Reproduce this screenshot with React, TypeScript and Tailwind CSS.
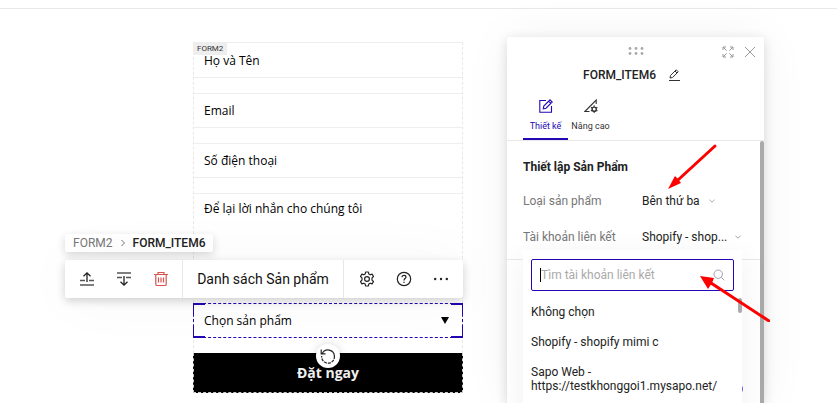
import type { ReactNode } from 'react';

const accounts = ['Không chọn', 'Shopify - shopify mimi c', 'Sapo Web - https://testkhonggoi1.mysapo.net/'];

function ToolButton({ label, children }: { label: string; children: ReactNode }) {
  return (
    <button type="button" aria-label={label} className="flex h-full w-[37px] items-center justify-center">
      {children}
    </button>
  );
}

function Chevron({ className = '' }: { className?: string }) {
  return (
    <svg aria-hidden="true" viewBox="0 0 8 8" fill="none" stroke="currentColor" className={`size-2 shrink-0 ${className}`}>
      <path d="M1.5 2.8 4 5.2 6.5 2.8" />
    </svg>
  );
}

function MoveUpIcon() {
  return (
    <svg viewBox="0 0 16 16" fill="none" className="size-4">
      <path d="M1 14h14M1 9.5h5M10 9.5h5" stroke="#555" strokeWidth="1.5" />
      <path d="M8 11V2M4.5 5.3 8 1.8l3.5 3.5" stroke="#222" strokeWidth="1.3" />
    </svg>
  );
}

function MoveDownIcon() {
  return (
    <svg viewBox="0 0 16 16" fill="none" className="size-4">
      <path d="M1 2h14M1 6.5h5M10 6.5h5" stroke="#555" strokeWidth="1.5" />
      <path d="M8 5v9M4.5 10.7 8 14.2l3.5-3.5" stroke="#222" strokeWidth="1.3" />
    </svg>
  );
}

function TrashIcon() {
  return (
    <svg viewBox="0 0 16 16" fill="none" stroke="#d9534f" className="size-4">
      <path d="M1 3.5h14M5 3.5v-2h6v2M2.8 4v9.2c0 .8.5 1.3 1.3 1.3h7.8c.8 0 1.3-.5 1.3-1.3V4M5.5 6.5v5M8 6.5v5M10.5 6.5v5" strokeWidth="1.2" />
    </svg>
  );
}

function GearIcon() {
  return (
    <svg viewBox="0 0 16 16" fill="none" stroke="#222" strokeWidth="1.2" strokeLinejoin="round" className="size-4">
      <path d="M6.6 1h2.8l.4 2 1.4.8 1.9-.7 1.4 2.4-1.5 1.4v2.2l1.5 1.4-1.4 2.4-1.9-.7-1.4.8-.4 2H6.6l-.4-2-1.4-.8-1.9.7-1.4-2.4L3 9.1V6.9L1.5 5.5l1.4-2.4 1.9.7 1.4-.8z" />
      <circle cx="8" cy="8" r="2.4" />
    </svg>
  );
}

function HelpIcon() {
  return (
    <svg viewBox="0 0 16 16" fill="none" stroke="#222" strokeWidth="1.2" className="size-4">
      <circle cx="8" cy="8" r="6.7" />
      <path d="M6 6.3c0-1.3.8-2 2-2s2 .7 2 1.8c0 1.5-2 1.5-2 3.3M8 10.7v1.2" />
    </svg>
  );
}

function Breadcrumb() {
  return (
    <nav aria-label="Breadcrumb" className="flex h-[18px] w-fit items-center gap-2 rounded-xs bg-white px-2 text-[12px] shadow-[0_3px_8px_rgba(0,0,0,0.16)]">
      <a href="#form2" className="text-[#777]">FORM2</a>
      <svg aria-hidden="true" viewBox="0 0 4 8" fill="none" stroke="#777" className="h-2 w-1">
        <path d="M.5 1l3 3-3 3" />
      </svg>
      <span className="font-medium text-[#222]">FORM_ITEM6</span>
    </nav>
  );
}

function Toolbar() {
  return (
    <div role="toolbar" aria-label="Danh sách Sản phẩm" className="flex h-[38px] w-[398px] rounded-xs bg-white shadow-[0_3px_10px_rgba(0,0,0,0.18),0_0_60px_rgba(0,0,0,0.04)]">
      <div className="flex px-[3px]">
        <ToolButton label="Lên"><MoveUpIcon /></ToolButton>
        <ToolButton label="Xuống"><MoveDownIcon /></ToolButton>
        <ToolButton label="Xóa"><TrashIcon /></ToolButton>
      </div>
      <button type="button" className="flex-1 border-x border-[#e8e8e8] text-[14px] text-[#111]">Danh sách Sản phẩm</button>
      <div className="flex px-1">
        <ToolButton label="Cài đặt"><GearIcon /></ToolButton>
        <ToolButton label="Trợ giúp"><HelpIcon /></ToolButton>
        <ToolButton label="Thêm">
          <svg viewBox="0 0 16 16" fill="#222" className="size-4">
            <circle cx="2.2" cy="8" r="1.2" /><circle cx="8" cy="8" r="1.2" /><circle cx="13.8" cy="8" r="1.2" />
          </svg>
        </ToolButton>
      </div>
    </div>
  );
}

function OrderForm() {
  const field = 'block w-full border-y border-[#eeeeee] px-[10px] text-black placeholder:text-black placeholder:opacity-100 outline-none';
  return (
    <div className="relative mt-[33px] flex-1">
      <form className="flex flex-col gap-[15px] border-x border-dashed border-[#e8e8e8] font-['Open_Sans',sans-serif] text-[12px]">
        <input aria-label="Họ và Tên" placeholder="Họ và Tên" className={`${field} -mb-px h-9`} />
        <input aria-label="Email" placeholder="Email" className={`${field} mt-px h-[35px]`} />
        <input aria-label="Số điện thoại" placeholder="Số điện thoại" className={`${field} h-[35px]`} />
        <textarea aria-label="Lời nhắn" placeholder="Để lại lời nhắn cho chúng tôi" className={`${field} h-[95px] resize-none pt-[6px]`} />
        <div className="relative -mx-px h-[35px]">
          <select aria-label="Chọn sản phẩm" className="h-full w-full appearance-none border border-dashed border-[#2407b4] px-[10px] text-black outline-none">
            <option>Chọn sản phẩm</option>
          </select>
          <svg aria-hidden="true" viewBox="0 0 8 7" className="absolute top-[14px] right-[14px] h-[7px] w-2"><path d="M0 0h8L4 7z" /></svg>
          <span className="absolute top-0 left-0 size-3 border-t-2 border-l border-[#2407b4]" />
          <span className="absolute top-0 right-0 size-3 border-t-2 border-r border-[#2407b4]" />
          <span className="absolute bottom-0 left-0 size-3 border-b-2 border-l border-[#2407b4]" />
          <span className="absolute right-0 bottom-0 size-3 border-r border-b-2 border-[#2407b4]" />
        </div>
        <div className="relative -mx-px h-10">
          <button type="submit" className="h-full w-full border border-t-0 border-dashed border-[#ccc] bg-black text-[14px] font-bold text-[#f0f0f0]">Đặt ngay</button>
          <button type="button" aria-label="Xoay" className="absolute -top-[9px] left-1/2 flex size-6 -translate-x-1/2 items-center justify-center rounded-full bg-white shadow-[0_0_10px_rgba(0,0,0,0.15)]">
            <svg viewBox="0 0 16 16" fill="none" stroke="#222" strokeWidth="1.2" className="size-4">
              <path d="M2.3 5.5A6.4 6.4 0 0 1 14.4 8M1.2 1.5v4.3h4.3" />
              <path d="M14.4 8A6.4 6.4 0 1 1 1.7 8" strokeDasharray="3 1" />
            </svg>
          </button>
        </div>
      </form>
      <span className="absolute top-0 left-0 flex h-[13px] items-center bg-[#eeeeee] px-1 text-[8px] text-[#333]">FORM2</span>
      <div className="absolute top-48 right-0 flex flex-col gap-2">
        <Breadcrumb />
        <Toolbar />
      </div>
    </div>
  );
}

function PanelHeader() {
  return (
    <header className="border-b border-[#e8e8e8] px-4">
      <div className="relative flex h-7 items-center justify-center">
        <svg aria-hidden="true" viewBox="0 0 16 8" fill="#aaa" className="h-2 w-4">
          <circle cx="2" cy="1.5" r="1.4" /><circle cx="8" cy="1.5" r="1.4" /><circle cx="14" cy="1.5" r="1.4" />
          <circle cx="2" cy="6.5" r="1.4" /><circle cx="8" cy="6.5" r="1.4" /><circle cx="14" cy="6.5" r="1.4" />
        </svg>
        <div className="absolute top-[9px] -right-2 flex gap-[10px] text-[#999]">
          <button type="button" aria-label="Phóng to">
            <svg viewBox="0 0 12 12" fill="none" stroke="currentColor" className="size-3">
              <path d="M1 4V1h3M8 1h3v3M11 8v3H8M4 11H1V8M1 1l3.7 3.7M11 1 7.3 4.7M11 11 7.3 7.3M1 11l3.7-3.7" />
            </svg>
          </button>
          <button type="button" aria-label="Đóng">
            <svg viewBox="0 0 12 12" fill="none" stroke="currentColor" className="size-3"><path d="m1 1 10 10M11 1 1 11" /></svg>
          </button>
        </div>
      </div>
      <div className="flex h-5 items-center justify-center gap-3 pr-2">
        <h1 className="text-[12px] font-medium text-[#222]">FORM_ITEM6</h1>
        <button type="button" aria-label="Đổi tên">
          <svg viewBox="0 0 12 12" fill="none" stroke="#333" className="size-3">
            <path d="M1 11.5h11M2 9l.5-2.5 5.7-5.7 2 2-5.7 5.7zM7 2l2 2" />
          </svg>
        </button>
      </div>
      <div role="tablist" className="mt-3 flex h-[43px] text-[9px]">
        <button type="button" role="tab" aria-selected="true" className="flex w-[45px] flex-col items-center gap-[7px] border-b-2 border-[#2407b4] pt-[2px] text-[#2407b4]">
          <svg viewBox="0 0 14 14" fill="none" stroke="currentColor" strokeWidth="1.1" className="size-[14px]">
            <path d="M7 1.5H.8v11.7h11.7V7M4.3 9.7l.5-2.7L11 .8l2.2 2.2L7 9.2zM9.6 2.2l2.2 2.2" />
          </svg>
          <span className="leading-3">Thiết kế</span>
        </button>
        <button type="button" role="tab" aria-selected="false" className="flex w-[45px] flex-col items-center gap-[7px] pt-[2px] text-[#333]">
          <svg viewBox="0 0 14 14" fill="none" stroke="currentColor" strokeWidth="1.1" className="size-[14px]">
            <path d="M5.5 12.5H.8L12.2 1v4" />
            <circle cx="10.2" cy="10.2" r="2.1" strokeWidth="1.4" />
            <path d="M10.2 6.6v1.2M10.2 12.6v1.2M7 8.4l1.1.6M12.3 11.4l1.1.6M7 12l1.1-.6M12.3 9l1.1-.6" strokeWidth="1.4" />
          </svg>
          <span className="leading-3">Nâng cao</span>
        </button>
      </div>
    </header>
  );
}

function AccountMenu() {
  return (
    <div className="absolute top-12 left-4 h-96 w-[219px] bg-white px-2 pt-[9px] shadow-[0_6px_30px_rgba(0,0,0,0.06)]">
      <div className="flex h-8 items-center rounded-xs border border-[#2407b4] px-2">
        <span aria-hidden="true" className="h-[14px] w-px bg-black" />
        <input aria-label="Tìm tài khoản liên kết" placeholder="Tìm tài khoản liên kết" className="min-w-0 flex-1 text-[12px] outline-none placeholder:text-[#aaa]" />
        <svg aria-hidden="true" viewBox="0 0 12 12" fill="none" stroke="#a0a0b0" className="size-3"><circle cx="5.2" cy="5.2" r="4.2" /><path d="m8.3 8.3 3 3" /></svg>
      </div>
      <ul role="listbox" aria-label="Tài khoản liên kết" className="mt-[6px] text-[12px] leading-[14px] text-[#222]">
        {accounts.map((name) => (
          <li key={name} role="option" aria-selected={false} className="py-2">{name}</li>
        ))}
      </ul>
      <span aria-hidden="true" className="absolute top-12 right-0 h-[15px] w-1 rounded-full bg-[#aaa]" />
    </div>
  );
}

function SettingsPanel() {
  return (
    <aside className="mt-7 flex w-[257px] shrink-0 flex-col rounded-t-xs bg-white shadow-[0_3px_12px_rgba(0,0,0,0.14),0_0_50px_rgba(0,0,0,0.05)]">
      <PanelHeader />
      <div className="relative flex-1">
        <section className="border-b border-[#e8e8e8] px-4 pt-4 pb-1 text-[12px]">
          <h2 className="h-[26px] leading-5 font-bold text-[#222]">Thiết lập Sản Phẩm</h2>
          <div className="flex h-9 items-center">
            <label htmlFor="product-type" className="w-[119px] text-[#777]">Loại sản phẩm</label>
            <select id="product-type" className="w-16 appearance-none text-[#222] outline-none">
              <option>Bên thứ ba</option>
            </select>
            <Chevron className="ml-[2px] text-[#aaa]" />
          </div>
          <div className="flex h-9 items-center">
            <span id="account-label" className="w-[119px] text-[#777]">Tài khoản liên kết</span>
            <button type="button" aria-labelledby="account-label" aria-haspopup="listbox" aria-expanded="true" className="flex items-center gap-2 text-[#222]">
              <span className="w-[84px] text-left whitespace-nowrap">Shopify - shop...</span>
              <Chevron className="text-[#aaa]" />
            </button>
          </div>
        </section>
        <div className="absolute top-0 right-0 bottom-0 w-1 rounded-t-full bg-[#aaa]" />
        <div className="absolute top-[242px] right-[21px] size-3 rounded-full bg-[#6a55e0]" />
        <div className="absolute top-[61px] left-0">
          <AccountMenu />
        </div>
      </div>
    </aside>
  );
}

function Annotations() {
  return (
    <svg aria-hidden="true" viewBox="0 0 110 180" fill="#f00" className="pointer-events-none absolute top-[142px] right-[67px] h-[180px] w-[110px]">
      <path d="M55 4 18 38" stroke="#f00" strokeWidth="3" strokeLinecap="round" />
      <path d="M8 47 15 34 18 37 21 41z" />
      <path d="m109 179-58-38" stroke="#f00" strokeWidth="3" strokeLinecap="round" />
      <path d="m40 134 14 2-2 5-4 6z" />
    </svg>
  );
}

export default function App() {
  return (
    <div className="relative flex h-screen flex-col overflow-hidden bg-white font-[Roboto,sans-serif]">
      <div className="h-[9px] shrink-0 border-b border-[#e8e8e8]" />
      <main className="flex flex-1 gap-11 pr-[73px] pl-[193px]">
        <OrderForm />
        <SettingsPanel />
      </main>
      <Annotations />
    </div>
  );
}
